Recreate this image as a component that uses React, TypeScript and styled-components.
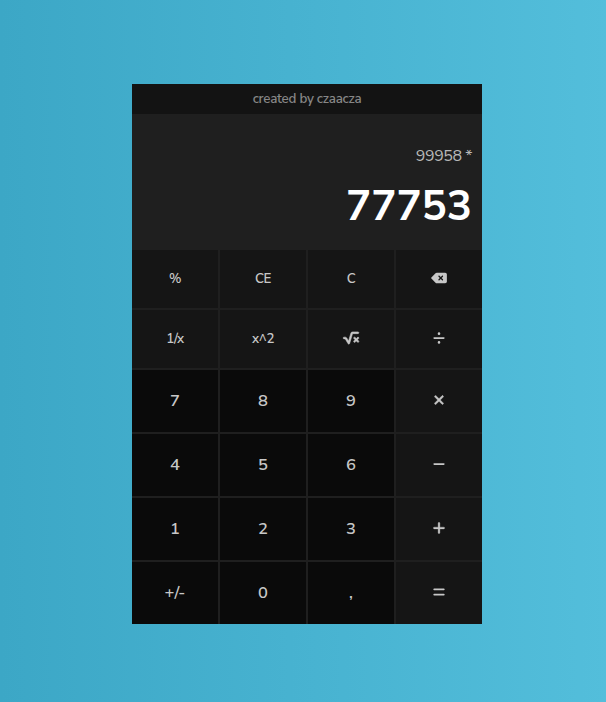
import React from "react";
import styled, { createGlobalStyle } from "styled-components";
import {
  FaDeleteLeft,
  FaDivide,
  FaEquals,
  FaMinus,
  FaPlus,
  FaSquareRootVariable,
  FaXmark,
} from "react-icons/fa6";

const GlobalStyle = createGlobalStyle`
  *, *::before, *::after { box-sizing: border-box; }
  body { margin: 0; font-family: "Nunito Sans", Nunito, "Noto Sans", sans-serif; }
`;

const Page = styled.main`
  min-height: 702px;
  height: 100vh;
  padding: 84px 0 0 132px;
  background: linear-gradient(90deg, #3ca7c6, #53bedb);
`;

const Calculator = styled.section`
  display: flex;
  flex-direction: column;
  width: 350px;
  height: 540px;
  background: #1f1f1f;
`;

const Credit = styled.header`
  height: 30px;
  background: #131313;
  color: #868686;
  font-size: 13.33px;
  font-weight: 600;
  letter-spacing: -0.25px;
  line-height: 30px;
  text-align: center;
`;

const Display = styled.div`
  display: flex;
  flex-direction: column;
  align-items: flex-end;
  height: 136px;
  padding: 30px 10px 0;
`;

const Operation = styled.div`
  color: #b9b9b9;
  font-size: 16px;
  letter-spacing: -0.45px;
  line-height: 24px;
`;

const Result = styled.div`
  color: #fff;
  font-size: 42px;
  font-weight: 700;
  line-height: 78px;
`;

const Keys = styled.div`
  display: grid;
  grid-template-columns: repeat(4, 86px);
  grid-template-rows: repeat(2, 58px) repeat(4, 62px);
  gap: 2px;
`;

type KeyKind = "function" | "digit" | "operator";

const Key = styled.button<{ $kind: KeyKind }>`
  display: flex;
  align-items: center;
  justify-content: center;
  padding: 0;
  border: 0;
  background: ${({ $kind }) => ($kind === "digit" ? "#0a0a0a" : "#151515")};
  color: #c7c7c7;
  font-family: inherit;
  font-size: ${({ $kind }) => ($kind === "digit" ? 16.5 : 13.33)}px;
  font-weight: 600;
  letter-spacing: ${({ $kind }) => ($kind === "digit" ? 0 : -0.35)}px;
  line-height: 18px;

  svg {
    display: block;
    width: 16px;
    height: 14px;
    margin-bottom: 2px;
    overflow: visible;
  }
`;

const RootIcon = styled(FaSquareRootVariable)`
  stroke-width: 20px;
`;

const TimesIcon = styled(FaXmark)`
  stroke-width: 22px;
`;

const PlusIcon = styled(FaPlus)`
  stroke-width: 12px;
`;

const keys: { name: string; kind: KeyKind; face: React.ReactNode }[] = [
  { name: "percent", kind: "function", face: "%" },
  { name: "clear entry", kind: "function", face: "CE" },
  { name: "clear", kind: "function", face: "C" },
  { name: "backspace", kind: "function", face: <FaDeleteLeft /> },
  { name: "reciprocal", kind: "function", face: "1/x" },
  { name: "square", kind: "function", face: "x^2" },
  { name: "square root", kind: "function", face: <RootIcon /> },
  { name: "divide", kind: "operator", face: <FaDivide /> },
  { name: "7", kind: "digit", face: "7" },
  { name: "8", kind: "digit", face: "8" },
  { name: "9", kind: "digit", face: "9" },
  { name: "multiply", kind: "operator", face: <TimesIcon /> },
  { name: "4", kind: "digit", face: "4" },
  { name: "5", kind: "digit", face: "5" },
  { name: "6", kind: "digit", face: "6" },
  { name: "subtract", kind: "operator", face: <FaMinus /> },
  { name: "1", kind: "digit", face: "1" },
  { name: "2", kind: "digit", face: "2" },
  { name: "3", kind: "digit", face: "3" },
  { name: "add", kind: "operator", face: <PlusIcon /> },
  { name: "sign", kind: "digit", face: "+/-" },
  { name: "0", kind: "digit", face: "0" },
  { name: "decimal", kind: "digit", face: "," },
  { name: "equals", kind: "operator", face: <FaEquals /> },
];

export default function App() {
  return (
    <>
      <GlobalStyle />
      <Page>
        <Calculator>
          <Credit>created by czaacza</Credit>
          <Display>
            <Operation>99958 *</Operation>
            <Result>77753</Result>
          </Display>
          <Keys>
            {keys.map(({ name, kind, face }) => (
              <Key key={name} $kind={kind} aria-label={name}>
                {face}
              </Key>
            ))}
          </Keys>
        </Calculator>
      </Page>
    </>
  );
}
